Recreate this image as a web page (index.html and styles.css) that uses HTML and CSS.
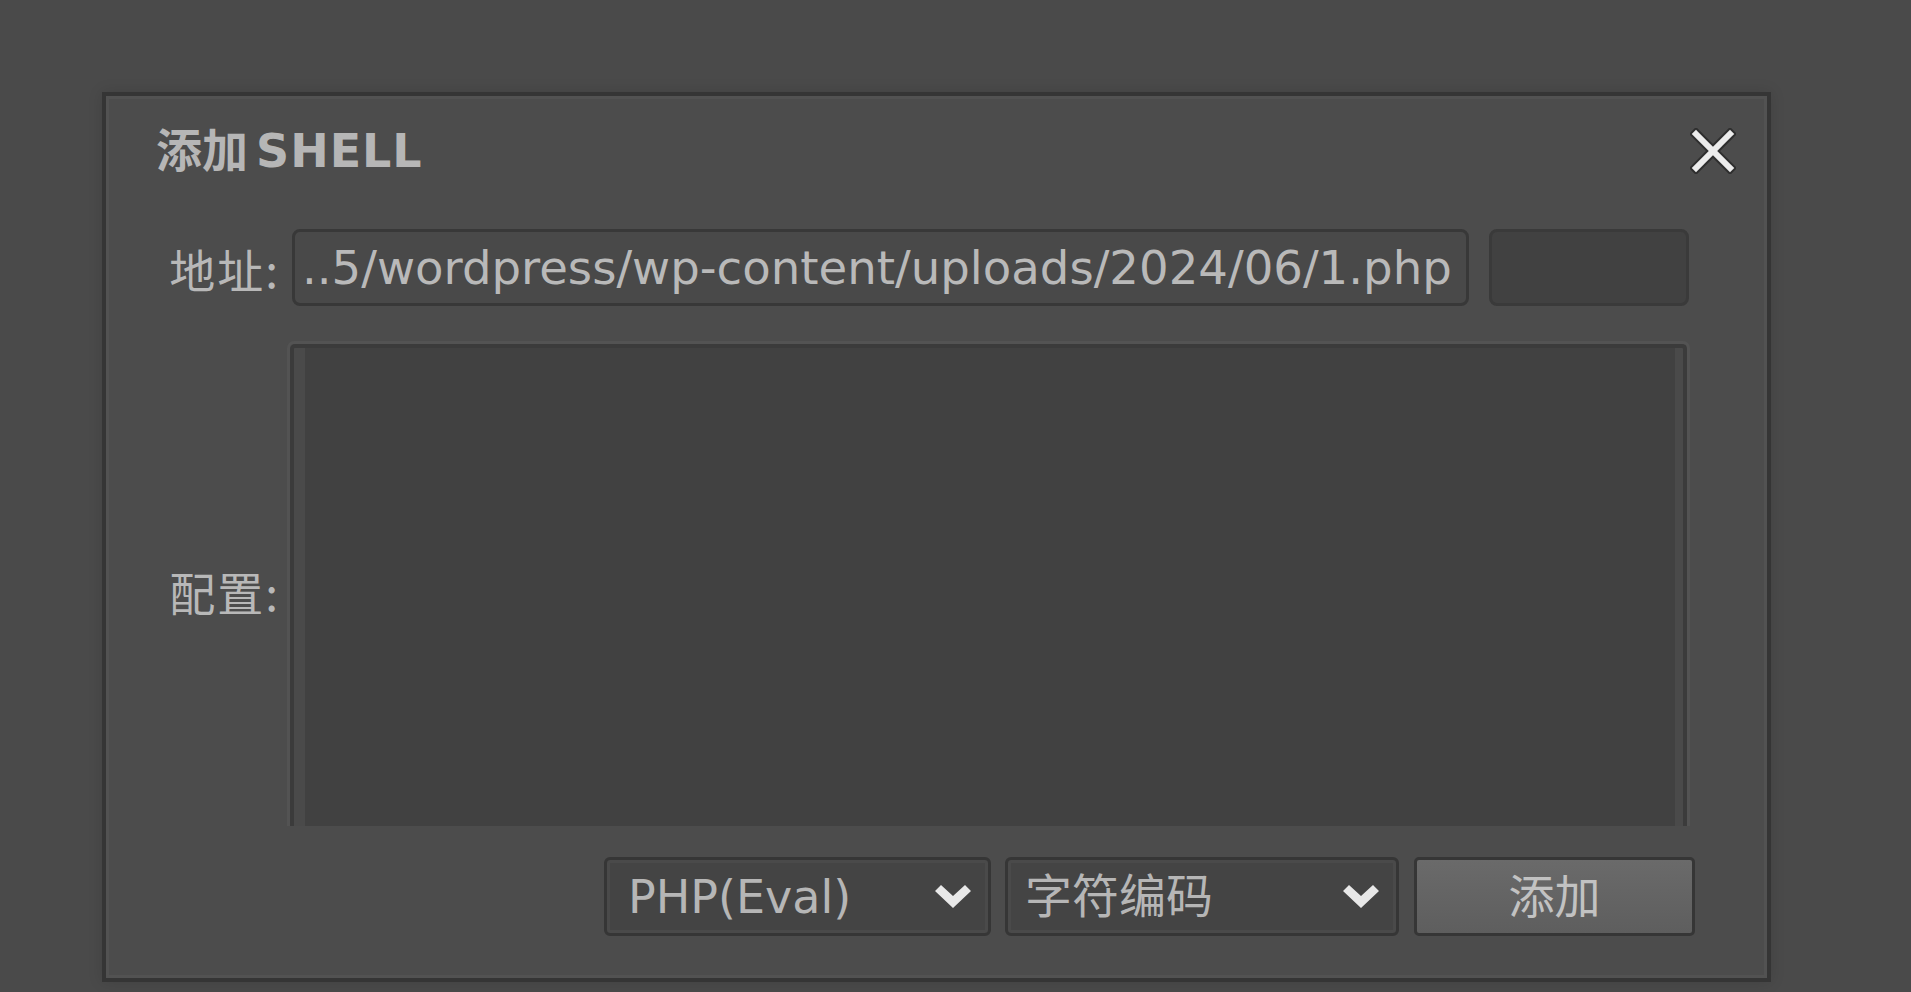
FILE: index.html
```html
<!DOCTYPE html>
<html lang="zh-CN">
<head>
<meta charset="utf-8">
<title>添加SHELL</title>
<link rel="stylesheet" href="styles.css">
</head>
<body>
<div class="dialog">
  <div class="header">
    <div class="title"><span class="title-cjk">添加</span><span class="title-latin">SHELL</span></div>
    <svg class="close" width="46" height="46" viewBox="0 0 46 46">
      <g stroke-linecap="square">
        <line x1="6" y1="6" x2="40" y2="40" stroke="#2e2e2e" stroke-width="10"/>
        <line x1="40" y1="6" x2="6" y2="40" stroke="#2e2e2e" stroke-width="10"/>
        <line x1="6" y1="6" x2="40" y2="40" stroke="#ececec" stroke-width="6"/>
        <line x1="40" y1="6" x2="6" y2="40" stroke="#ececec" stroke-width="6"/>
      </g>
    </svg>
  </div>
  <div class="form">
    <div class="label">地址:</div>
    <div class="field-row">
      <div class="input">..5/wordpress/wp-content/uploads/2024/06/1.php</div>
      <div class="extra"></div>
    </div>
    <div class="label label-config">配置:</div>
    <div class="area">
      <div class="area-inner">
        <div class="area-content"></div>
      </div>
    </div>
  </div>
  <div class="footer">
    <div class="select select-type">
      <span class="select-text">PHP(Eval)</span>
      <svg class="chev" width="36" height="24" viewBox="0 0 36 24"><polygon points="0,6 6,0 18,11 30,0 36,6 18,23" fill="#e8e8e8"/></svg>
    </div>
    <div class="select select-enc">
      <span class="select-text">字符编码</span>
      <svg class="chev" width="36" height="24" viewBox="0 0 36 24"><polygon points="0,6 6,0 18,11 30,0 36,6 18,23" fill="#e8e8e8"/></svg>
    </div>
    <div class="button">添加</div>
  </div>
</div>
</body>
</html>
```

FILE: styles.css
```css
* {
  box-sizing: border-box;
}

html, body {
  margin: 0;
  padding: 0;
  background: #4a4a4a;
  height: 100%;
  overflow: hidden;
}

body {
  font-family: "DejaVu Sans", "Noto Sans CJK SC", sans-serif;
  color: #b8b8b8;
  padding: 92px 0 0 102px;
}

.dialog {
  width: 1669px;
  height: 890px;
  background: #4c4c4c;
  border: 4px solid #353535;
  box-shadow: inset 0 0 0 3px #525252, 0 0 14px rgba(0, 0, 0, 0.12);
  display: flex;
  flex-direction: column;
}

.header {
  height: 133px;
  padding: 25px 31px 0 50px;
  display: flex;
  justify-content: space-between;
  align-items: flex-start;
}

.title {
  font-size: 46px;
  line-height: 52px;
  font-weight: bold;
  color: #b6b6b6;
  display: flex;
  align-items: baseline;
}

.title-cjk {
  font-family: "Noto Sans CJK SC", sans-serif;
}

.title-latin {
  margin-left: 8px;
  letter-spacing: 1px;
}

.close {
  margin-top: 7px;
}

.form {
  display: grid;
  grid-template-columns: 181px 1403px;
  grid-template-rows: 77px 485px;
  row-gap: 35px;
}

.label {
  font-family: "Noto Sans CJK SC", sans-serif;
  font-size: 46px;
  letter-spacing: 2px;
  color: #b8b8b8;
  text-align: right;
  padding-right: 7px;
  align-self: center;
}

.label-config {
  margin-top: 14px;
}

.field-row {
  display: flex;
  gap: 20px;
  padding-left: 5px;
}

.input {
  width: 1177px;
  height: 77px;
  border: 3px solid #383838;
  border-radius: 8px;
  background: #494949;
  font-size: 46.6px;
  color: #b9b9b9;
  padding-left: 7px;
  display: flex;
  align-items: center;
  white-space: nowrap;
  overflow: hidden;
}

.extra {
  width: 200px;
  height: 77px;
  border: 3px solid #3a3a3a;
  border-radius: 8px;
  background: #414141;
}

.area {
  border: 3px solid #535353;
  border-bottom: none;
  border-radius: 7px 7px 0 0;
  height: 485px;
}

.area-inner {
  height: 100%;
  border: 4px solid #3b3b3b;
  border-bottom: none;
  border-radius: 5px 5px 0 0;
  background: #4a4a4a;
  padding: 0 8px 0 11px;
}

.area-content {
  height: 100%;
  background: #414141;
}

.footer {
  margin-top: 31px;
  height: 79px;
  display: flex;
  justify-content: flex-end;
  gap: 14px;
  padding-right: 72px;
}

.select {
  height: 79px;
  border: 3px solid #363636;
  border-radius: 6px;
  background: #444444;
  box-shadow: inset 0 0 0 3px #4a4a4a;
  display: flex;
  align-items: center;
  justify-content: space-between;
  padding: 0 17px 0 21px;
}

.select-type {
  width: 387px;
}

.select-enc {
  width: 394px;
  padding-left: 17px;
}

.select-text {
  font-size: 46px;
  color: #b6b6b6;
  white-space: nowrap;
}

.select-enc .select-text {
  font-family: "Noto Sans CJK SC", sans-serif;
  font-size: 47px;
  padding-bottom: 8px;
}

.chev {
  flex: none;
}

.button {
  width: 281px;
  height: 79px;
  margin-left: 1px;
  border: 3px solid #363636;
  border-radius: 5px;
  background: linear-gradient(#6a6a6a, #5e5e5e);
  color: #c2c2c2;
  font-family: "Noto Sans CJK SC", sans-serif;
  font-size: 46px;
  padding-bottom: 8px;
  display: flex;
  align-items: center;
  justify-content: center;
}
```
